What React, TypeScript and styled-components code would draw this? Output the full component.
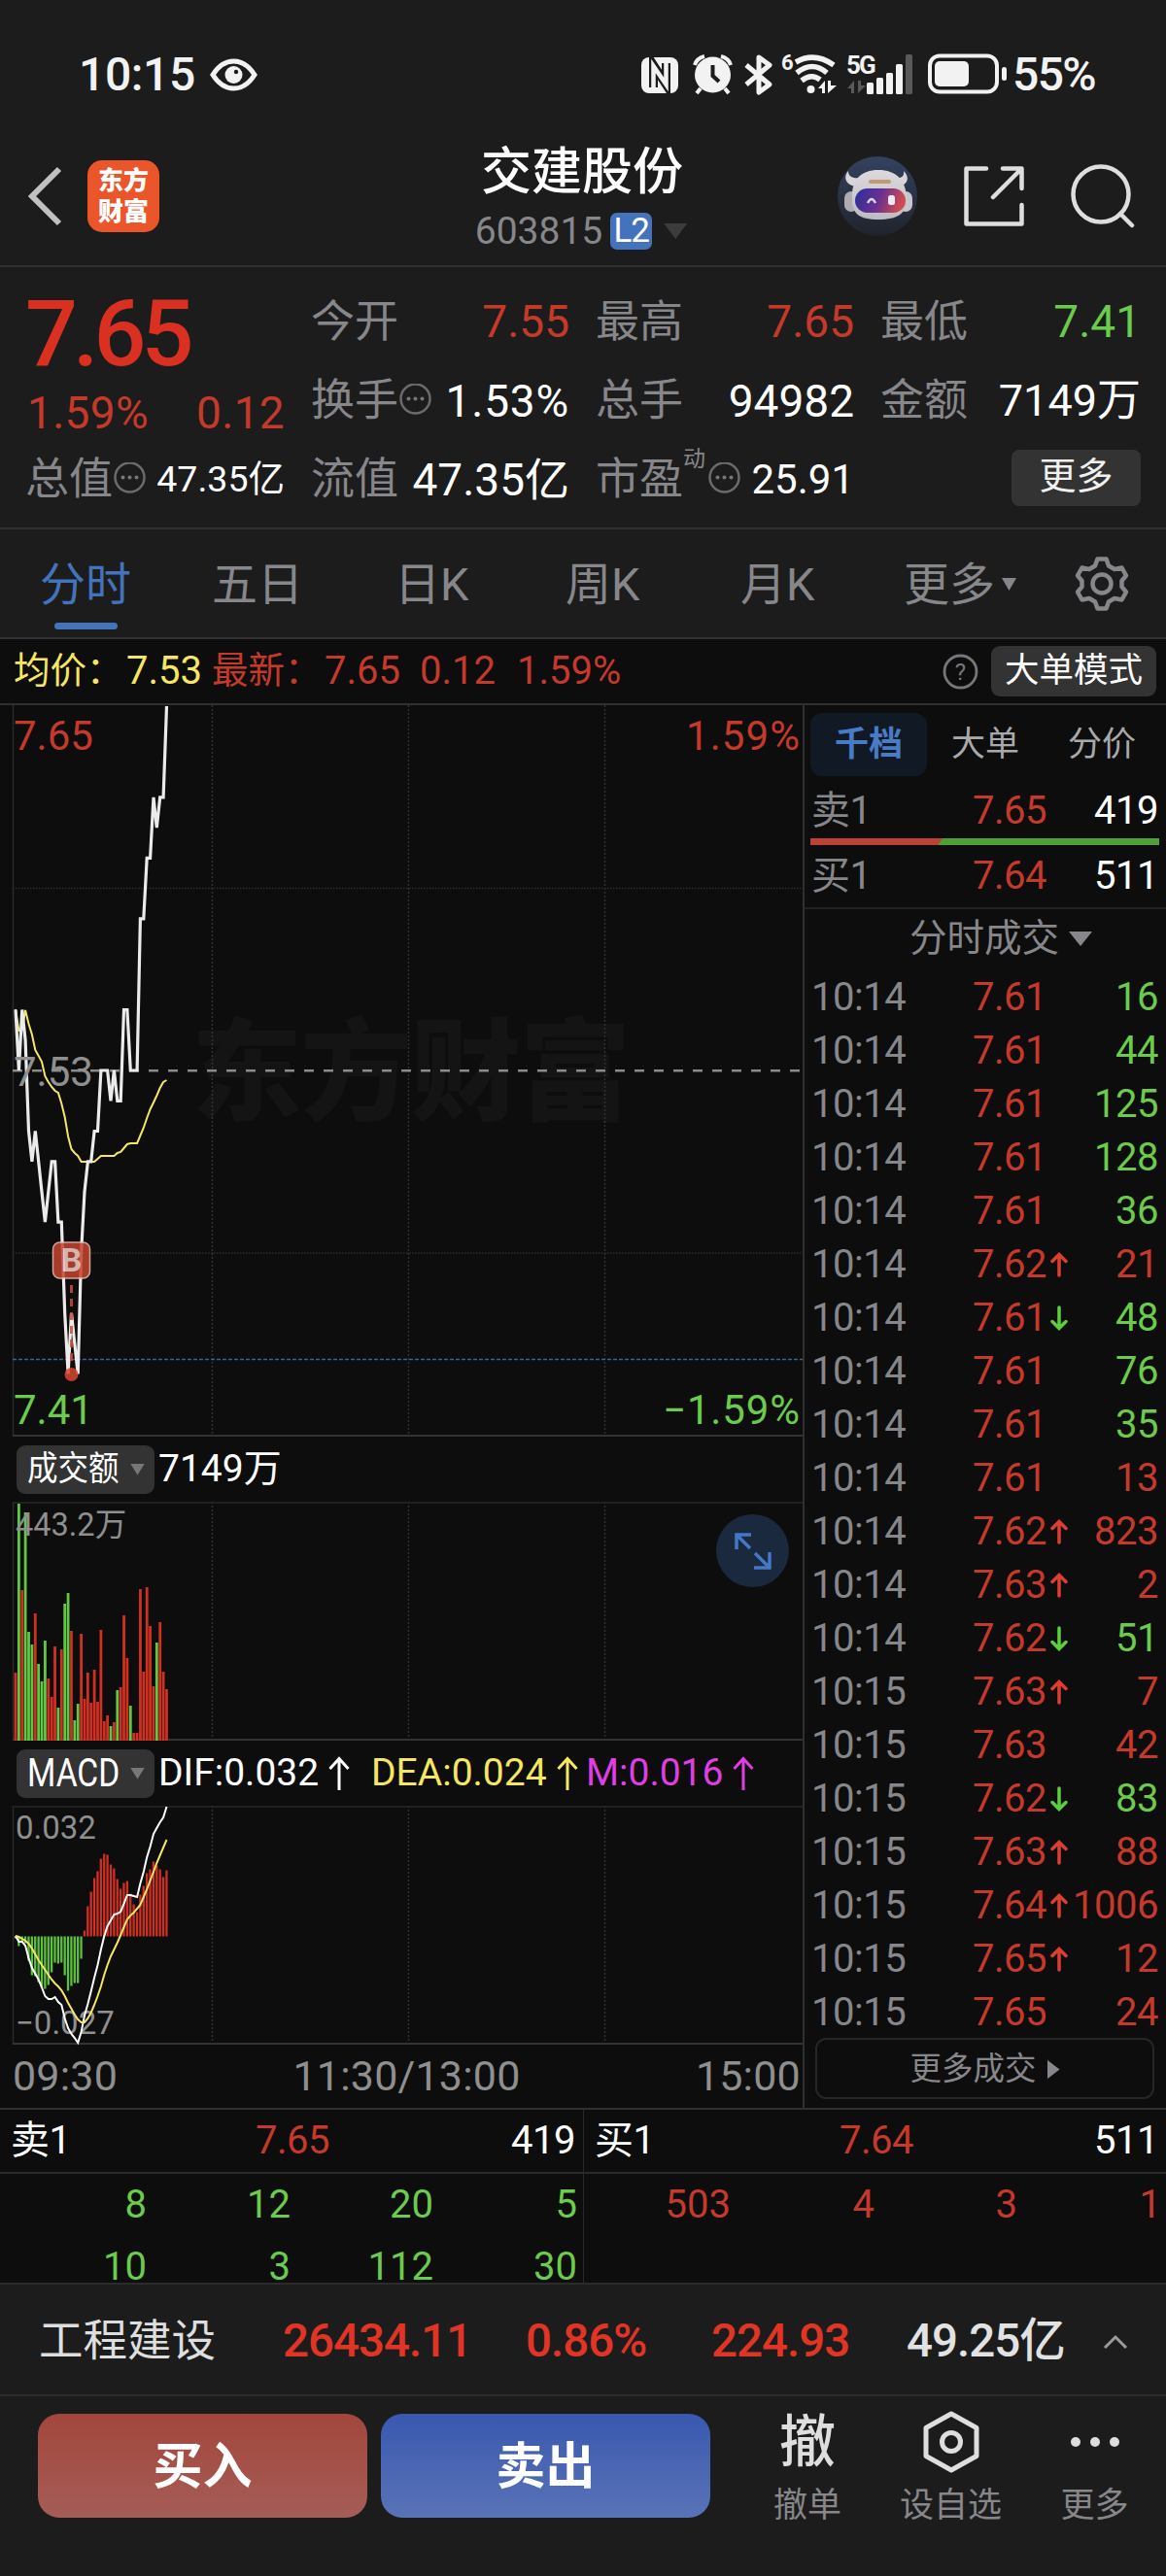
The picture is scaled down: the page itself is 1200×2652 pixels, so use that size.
import React, {ReactElement} from "react";
import styled, {createGlobalStyle} from "styled-components";

const RED = '#c5392b';
const GREEN = '#6bcb4c';
const YELLOW = '#f5e663';
const BLUE = '#4472bb';
const GREY = '#87878b';
const LINE = '#303031';

const GlobalStyle = createGlobalStyle`
    * {
        box-sizing: border-box;
    }
    body {
        margin: 0;
        background: #1c1c1c;
        color: #fff;
        font-family: Roboto, "Noto Sans CJK SC", sans-serif;
        font-size: 40px;
        line-height: 1;
    }
    svg {
        display: block;
        flex: none;
    }
`;

const Page = styled.div`
    width: 1200px;
    height: 2652px;
    overflow: hidden;
    display: flex;
    flex-direction: column;
    white-space: nowrap;
`;

/* ---------- status bar ---------- */

const StatusBar = styled.div`
    height: 150px;
    padding: 3px 71px 0 81px;
    display: flex;
    align-items: center;
    color: #f2f2f2;
    font-size: 48px;
    font-weight: 500;
`;

const Clock = styled.span`
    width: 135px;
    letter-spacing: -0.4px;
`;

const StatusIcons = styled.div`
    margin-left: auto;
    display: flex;
    align-items: center;
`;

const Battery = styled.span`
    width: 87px;
    margin-left: 2px;
    letter-spacing: -1.6px;
`;

/* ---------- header ---------- */

const Header = styled.header`
    height: 125px;
    padding: 0 32px 0 28px;
    border-bottom: 2px solid ${LINE};
    display: grid;
    grid-template-columns: 1fr 240px 1fr;
`;

const HeaderSide = styled.div<{$end?: boolean}>`
    display: flex;
    align-items: center;
    height: 104px;
    gap: ${p => p.$end ? 48 : 24}px;
    justify-content: ${p => p.$end ? 'flex-end' : 'flex-start'};
`;

const Logo = styled.div`
    width: 74px;
    height: 74px;
    border-radius: 15px;
    background: #ea5529;
    display: flex;
    flex-direction: column;
    align-items: center;
    justify-content: center;
    font-size: 26px;
    line-height: 32px;
    font-weight: 900;
`;

const Title = styled.div`
    display: flex;
    flex-direction: column;
    align-items: center;
`;

const StockName = styled.h1`
    margin: 2px 0 0 2px;
    font-size: 52px;
    line-height: 52px;
    font-weight: 500;
`;

const StockCode = styled.div`
    margin-top: 14px;
    height: 40px;
    display: flex;
    align-items: center;
    color: ${GREY};
    font-size: 39px;
`;

const LevelTag = styled.span`
    width: 43px;
    height: 38px;
    margin: 0 12px 0 8px;
    border-radius: 7px;
    background: ${BLUE};
    color: #fff;
    font-size: 35px;
    line-height: 38px;
    text-align: center;
    letter-spacing: -1px;
`;

const Triangle = styled.i<{$w: number; $h: number; $color: string}>`
    flex: none;
    width: ${p => p.$w}px;
    height: ${p => p.$h}px;
    background: ${p => p.$color};
    clip-path: polygon(0 0, 100% 0, 50% 100%);
`;

/* ---------- quote ---------- */

const Quote = styled.section`
    height: 270px;
    padding: 15px 26px 0;
    border-bottom: 2px solid ${LINE};
    display: grid;
    grid-template-columns: 267px 266px 266px 268px;
    grid-template-rows: 82px 81px 81px;
    column-gap: 27px;
    font-size: 46px;
`;

const BigPrice = styled.div`
    grid-row: span 2;
    display: flex;
    flex-direction: column;
    color: ${RED};
`;

const Price = styled.div`
    height: 108px;
    font-size: 95px;
    line-height: 108px;
    font-weight: 500;
    letter-spacing: -5px;
    color: #d93022;
`;

const Change = styled.div`
    display: flex;
    justify-content: space-between;
    align-items: center;
    height: 54px;
    padding-left: 2px;
    letter-spacing: 0.3px;
`;

const Cell = styled.div`
    display: flex;
    align-items: center;
`;

const CellLabel = styled.span`
    font-size: 45px;
    color: ${GREY};
`;

const CellValue = styled.span<{$color?: string; $size?: number; $spacing?: number}>`
    margin-left: auto;
    font-size: ${p => p.$size || 46}px;
    letter-spacing: ${p => p.$spacing || 0}px;
    color: ${p => p.$color || '#fff'};
`;

const Sup = styled.sup`
    align-self: flex-start;
    margin-top: 5px;
    width: 25px;
    font-size: 23px;
    line-height: 30px;
    color: ${GREY};
`;

const MoreButton = styled.button`
    margin: -3px 0 0 auto;
    width: 133px;
    height: 58px;
    padding: 0 0 4px;
    border: 0;
    border-radius: 8px;
    background: #333334;
    color: #f0f0f0;
    font: inherit;
    font-size: 38px;
`;

/* ---------- period tabs ---------- */

const Tabs = styled.nav`
    height: 113px;
    padding: 0 37px 0 41px;
    border-bottom: 2px solid ${LINE};
    display: grid;
    grid-template-columns: 177px 188px 176px 180px 168px 175px 58px;
    align-items: center;
    font-size: 47px;
    color: ${GREY};
`;

const Tab = styled.div<{$active?: boolean}>`
    position: relative;
    display: flex;
    align-items: center;
    gap: 7px;
    height: 110px;
    padding-top: 2px;
    color: ${p => p.$active ? BLUE : GREY};
    &::after {
        content: '';
        display: ${p => p.$active ? 'block' : 'none'};
        position: absolute;
        left: 15px;
        bottom: 8px;
        width: 65px;
        height: 7px;
        border-radius: 4px;
        background: ${BLUE};
    }
`;

const InfoRow = styled.div`
    height: 68px;
    padding: 0 10px 0 14px;
    background: #0d0d0d;
    border-bottom: 2px solid ${LINE};
    display: flex;
    align-items: center;
    font-size: 40px;
    color: ${RED};
`;

const InfoLabel = styled.span<{$w: number; $color: string}>`
    width: ${p => p.$w}px;
    font-size: 37.5px;
    color: ${p => p.$color};
`;

const InfoValue = styled.span<{$w: number; $color?: string}>`
    width: ${p => p.$w}px;
    color: ${p => p.$color || RED};
`;

const ModeButton = styled.button`
    margin-left: 13px;
    width: 170px;
    height: 52px;
    padding: 0;
    border: 0;
    border-radius: 9px;
    background: #333334;
    color: #fff;
    font: inherit;
    font-size: 35.5px;
`;

/* ---------- charts ---------- */

const Main = styled.main`
    height: 1444px;
    background: #0d0d0d;
    display: grid;
    grid-template-columns: 828px 372px;
`;

const Charts = styled.section`
    position: relative;
    border-right: 2px solid ${LINE};
    display: flex;
    flex-direction: column;
`;

const IndicatorRow = styled.div<{$h: number}>`
    height: ${p => p.$h}px;
    padding-left: 17px;
    display: flex;
    align-items: center;
    font-size: 39px;
`;

const Picker = styled.div`
    width: 142px;
    height: 50px;
    padding: 0 10px 0 11px;
    margin-right: 4px;
    border-radius: 9px;
    background: #333334;
    display: flex;
    align-items: center;
    justify-content: space-between;
`;

/* the picker caption is condensed to a fixed width */
const Caption = styled.span<{$scale: number; $size: number}>`
    width: 94px;
    font-size: ${p => p.$size}px;
    transform: scaleX(${p => p.$scale});
    transform-origin: left;
`;

const Indicator = styled.span<{$color: string; $w: number}>`
    display: flex;
    align-items: center;
    gap: 10px;
    width: ${p => p.$w}px;
    color: ${p => p.$color};
`;

const TimeAxis = styled.div`
    flex: 1;
    padding: 0 2px 0 13px;
    display: flex;
    align-items: center;
    justify-content: space-between;
    font-size: 43px;
    letter-spacing: 0.2px;
    color: #8f8f8f;
`;

const ExpandButton = styled.button`
    position: absolute;
    left: 737px;
    top: 833px;
    width: 75px;
    height: 75px;
    padding: 18px;
    border: 0;
    border-radius: 50%;
    background: #1b293f;
`;

/* ---------- order side ---------- */

const Side = styled.aside`
    display: flex;
    flex-direction: column;
`;

const SideTabs = styled.div`
    height: 81px;
    padding: 0 6px;
    display: grid;
    grid-template-columns: repeat(3, 120px);
    align-items: center;
`;

const SideTab = styled.div<{$active?: boolean}>`
    height: 65px;
    border-radius: 12px;
    background: ${p => p.$active ? '#111a24' : 'none'};
    color: ${p => p.$active ? '#497cc6' : '#a9a9ab'};
    font-size: 35px;
    font-weight: ${p => p.$active ? 700 : 400};
    line-height: 66px;
    text-align: center;
`;

const Row = styled.div<{$h: number}>`
    height: ${p => p.$h}px;
    padding: 0 8px 0 7px;
    display: grid;
    grid-template-columns: 166px 75px 1fr auto;
    align-items: center;
    color: ${GREY};
    letter-spacing: -0.5px;
`;

const Num = styled.span<{$color: string; $left?: boolean}>`
    color: ${p => p.$color};
    text-align: ${p => p.$left ? 'left' : 'right'};
`;

const ArrowSlot = styled.span`
    width: 22px;
    padding-left: 5px;
`;

const RatioBar = styled.div`
    height: 7px;
    margin: 0 7px 0 6px;
    background: linear-gradient(120deg, #bd4236 0 37.3%, #4ea034 37.5%);
`;

const DealsTitle = styled.div`
    height: 65px;
    border-top: 2px solid #222223;
    display: flex;
    align-items: center;
    gap: 10px;
    padding: 0 0 2px 108px;
    font-size: 38.5px;
    color: ${GREY};
`;

const MoreDeals = styled.button`
    margin: -2px 12px 0 11px;
    height: 63px;
    border: 2px solid #262627;
    border-radius: 11px;
    background: none;
    display: flex;
    align-items: center;
    justify-content: center;
    gap: 11px;
    padding-top: 3px;
    font: inherit;
    font-size: 32.5px;
    color: ${GREY};
`;

const RightTriangle = styled.i`
    width: 13px;
    height: 20px;
    background: ${GREY};
    clip-path: polygon(0 0, 100% 50%, 0 100%);
`;

/* ---------- order queue ---------- */

const Queue = styled.section`
    height: 182px;
    background: #0d0d0d;
    border-top: 2px solid ${LINE};
    border-bottom: 2px solid #2b2b2c;
    display: grid;
    grid-template-columns: 1fr 1fr;
`;

const QueueSide = styled.div`
    height: 178px;
    & + & {
        border-left: 1px solid #29292a;
    }
`;

const QueueHead = styled.div`
    height: 66px;
    padding: 0 8px 0 11px;
    border-bottom: 2px solid #29292a;
    display: grid;
    grid-template-columns: 252px 1fr auto;
    align-items: center;
    letter-spacing: -0.5px;
`;

const QueueGrid = styled.div`
    width: 594px;
    display: grid;
    grid-template-columns: 151px 148px 147px 148px;
    grid-auto-rows: 64px;
    align-items: center;
`;

/* ---------- footer ---------- */

const IndexRow = styled.div`
    height: 115px;
    padding: 4px 38px 0 40px;
    border-bottom: 2px solid #2b2b2c;
    display: grid;
    grid-template-columns: 251px 250px 191px 201px 202px 1fr;
    align-items: center;
    font-size: 47.5px;
    font-weight: 500;
    color: #e03526;
    letter-spacing: -1px;
`;

const IndexName = styled.span`
    font-size: 45.5px;
    font-weight: 400;
    letter-spacing: 0;
    color: #dededf;
`;

const Turnover = styled.span`
    color: #e2e2e3;
`;

const Footer = styled.footer`
    flex: 1;
    padding: 18px 0 0 39px;
    display: flex;
    align-items: flex-start;
`;

const TradeButton = styled.button<{$from: string; $to: string}>`
    flex: none;
    width: 339px;
    height: 107px;
    margin-right: 14px;
    padding: 2px 0 0;
    border: 0;
    border-radius: 22px;
    background: linear-gradient(${p => p.$from}, ${p => p.$to});
    color: #fff;
    font: inherit;
    font-size: 51px;
    font-weight: 700;
`;

const Action = styled.div<{$w: number}>`
    flex: none;
    width: ${p => p.$w}px;
    display: flex;
    flex-direction: column;
    align-items: center;
    font-size: 35px;
    color: ${GREY};
`;

const ActionIcon = styled.div`
    height: 74px;
    margin-top: -8px;
    margin-bottom: 11px;
    display: flex;
    align-items: center;
    font-size: 58px;
    font-weight: 500;
    color: #dededf;
`;

/* ---------- data ---------- */

const prices = [
    7.55, 7.53, 7.55, 7.54, 7.51, 7.50, 7.51, 7.50, 7.49, 7.48, 7.49, 7.50, 7.50, 7.48, 7.48, 7.45,
    7.43, 7.45, 7.44, 7.43, 7.47, 7.49, 7.50, 7.50, 7.51, 7.51, 7.53, 7.53, 7.53, 7.52, 7.53, 7.52,
    7.52, 7.55, 7.55, 7.53, 7.53, 7.53, 7.58, 7.58, 7.60, 7.60, 7.62, 7.61, 7.62, 7.62, 7.65,
];

const average = [
    313, 335, 334, 314, 328, 339, 355, 361, 367, 382, 388, 393, 397, 399, 410, 424, 444, 457, 461, 464,
    470, 470, 470, 470, 470, 467, 464, 464, 464, 464, 464, 461, 460, 456, 452, 451, 451, 451, 443, 435,
    425, 416, 409, 402, 394, 388, 386,
];

const volumes: [string, number][] = [
    ['r', 70], ['g', 244], ['r', 155], ['g', 235], ['g', 112], ['g', 99], ['r', 131], ['g', 79], ['g', 61],
    ['g', 103], ['r', 64], ['r', 45], ['r', 97], ['g', 34], ['r', 94], ['g', 141], ['g', 152], ['r', 113],
    ['g', 21], ['g', 38], ['r', 110], ['r', 43], ['r', 70], ['r', 39], ['r', 73], ['r', 40], ['r', 114],
    ['r', 20], ['r', 26], ['g', 15], ['r', 19], ['g', 52], ['r', 55], ['r', 129], ['r', 85], ['g', 36],
    ['r', 8], ['r', 8], ['r', 156], ['r', 71], ['r', 158], ['r', 118], ['r', 56], ['g', 101], ['r', 122],
    ['r', 71], ['r', 53],
];

const histogram = [
    -2, -10, -5, -7, -25, -40, -41, -47, -52, -54, -50, -37, -27, -28, -27, -40, -56, -51, -48, -48, -23,
    6, 31, 46, 60, 67, 80, 85, 84, 74, 70, 59, 49, 55, 57, 44, 33, 25, 43, 52, 65, 69, 77, 73, 69, 61, 68,
];

const dif = [
    134, 140, 140, 144, 157, 167, 173, 179, 187, 196, 199, 199, 197, 202, 205, 219, 229, 235, 239, 244,
    233, 216, 204, 191, 177, 164, 148, 134, 124, 118, 112, 111, 109, 101, 92, 92, 93, 94, 80, 68, 53, 42,
    29, 23, 17, 12, 1,
];

const dea = [
    134, 135, 137, 139, 142, 147, 153, 159, 164, 169, 174, 179, 183, 186, 190, 196, 203, 209, 215, 220,
    223, 223, 219, 213, 205, 196, 186, 174, 164, 155, 148, 141, 133, 125, 117, 113, 110, 106, 102, 94, 86,
    77, 68, 59, 51, 43, 35,
];

type Deal = [string, string, number, string, string];

const deals: Deal[] = [
    ['10:14', '7.61', 0, '16', 'g'],
    ['10:14', '7.61', 0, '44', 'g'],
    ['10:14', '7.61', 0, '125', 'g'],
    ['10:14', '7.61', 0, '128', 'g'],
    ['10:14', '7.61', 0, '36', 'g'],
    ['10:14', '7.62', 1, '21', 'r'],
    ['10:14', '7.61', -1, '48', 'g'],
    ['10:14', '7.61', 0, '76', 'g'],
    ['10:14', '7.61', 0, '35', 'g'],
    ['10:14', '7.61', 0, '13', 'r'],
    ['10:14', '7.62', 1, '823', 'r'],
    ['10:14', '7.63', 1, '2', 'r'],
    ['10:14', '7.62', -1, '51', 'g'],
    ['10:15', '7.63', 1, '7', 'r'],
    ['10:15', '7.63', 0, '42', 'r'],
    ['10:15', '7.62', -1, '83', 'g'],
    ['10:15', '7.63', 1, '88', 'r'],
    ['10:15', '7.64', 1, '1006', 'r'],
    ['10:15', '7.65', 1, '12', 'r'],
    ['10:15', '7.65', 0, '24', 'r'],
];

const minuteX = (i: number): number => 16 + i * 3.38;
const toPoints = (ys: number[]): string => ys.map((y, i) => `${minuteX(i).toFixed(1)},${y.toFixed(1)}`).join(' ');
const tone = (c: string): string => c === 'g' ? GREEN : RED;

/* ---------- icons ---------- */

const EyeIcon = (): ReactElement => (
    <svg width="49" height="34" viewBox="0 0 49 34" fill="none">
        <path d="M3 17C9 7.500 16 3 24.500 3S40 7.500 46 17C40 26.500 33 31 24.500 31S9 26.500 3 17Z" stroke="#f2f2f2" strokeWidth="5"/>
        <circle cx="24.500" cy="17" r="9" fill="#f2f2f2"/>
        <circle cx="27" cy="14" r="2.200" fill="#1c1c1c"/>
    </svg>
);

const SignalIcons = (): ReactElement => (
    <svg width="380" height="56" viewBox="0 -6 380 56" fill="#f2f2f2">
        {/* nfc */}
        <rect x="0" y="4" width="38" height="37" rx="8"/>
        <path d="M12.500 35V12L25.500 32V10" fill="none" stroke="#1c1c1c" strokeWidth="9"/>
        <path d="M12.500 41V13L25.500 32V4" fill="none" stroke="#f2f2f2" strokeWidth="4.500"/>
        {/* alarm */}
        <circle cx="73.500" cy="22" r="18.500"/>
        <path d="M55 12Q57 5 65 3M92 12Q90 5 82 3M61 36L57 41M86 36L90 41" fill="none" stroke="#f2f2f2" strokeWidth="4"/>
        <path d="M73.500 12V23L80 29" fill="none" stroke="#1c1c1c" strokeWidth="4"/>
        {/* bluetooth */}
        <path d="M108 12L132 32L121 40V4L132 12L108 32" fill="none" stroke="#f2f2f2" strokeWidth="5" strokeLinejoin="round"/>
        {/* wifi */}
        <text x="144" y="17" fontSize="22" fontWeight="700">6</text>
        <path d="M159 9Q178 -2 198 12" fill="none" stroke="#f2f2f2" strokeWidth="5.500"/>
        <path d="M160 20Q176 7 191 20" fill="none" stroke="#f2f2f2" strokeWidth="5.500"/>
        <path d="M165 28Q175 20 184 27" fill="none" stroke="#f2f2f2" strokeWidth="5.500"/>
        <circle cx="174.500" cy="37" r="4"/>
        <path d="M182 36L189 28V41H186V36ZM192 28V41L201 33H195V28Z"/>
        {/* cellular */}
        <text x="211" y="21" fontSize="26" fontWeight="700" letterSpacing="-1.800">5G</text>
        <path d="M212 36L219 28V41H216V36ZM223 28V41L231 33H226V28Z" fill="#595959"/>
        <rect x="232" y="30" width="7" height="12" rx="1.500"/>
        <rect x="242" y="25" width="7" height="17" rx="1.500"/>
        <rect x="252" y="20" width="7" height="22" rx="1.500"/>
        <rect x="262" y="11" width="7" height="31" rx="1.500"/>
        <rect x="272" y="1" width="7" height="41" rx="1.500" fill="#595959"/>
        {/* battery */}
        <rect x="297" y="2.500" width="69" height="37" rx="10" fill="none" stroke="#f2f2f2" strokeWidth="4"/>
        <rect x="302" y="8" width="35" height="26" rx="5"/>
        <rect x="371" y="14" width="5" height="14" rx="2.500"/>
    </svg>
);

const BackIcon = (): ReactElement => (
    <svg width="38" height="62" viewBox="0 0 38 62" fill="none" stroke="#c0c0c0" strokeWidth="6">
        <path d="M33 3L5 31L33 59"/>
    </svg>
);

const RobotIcon = (): ReactElement => (
    <svg width="82" height="82" viewBox="0 0 82 82">
        <defs>
            <linearGradient id="sky" x1="0" y1="0" x2="0" y2="1">
                <stop offset="0" stopColor="#34425f"/>
                <stop offset="1" stopColor="#1f232b"/>
            </linearGradient>
            <linearGradient id="visor" x1="0" y1="0" x2="1" y2="0.200">
                <stop offset="0" stopColor="#28309b"/>
                <stop offset="0.550" stopColor="#6a3090"/>
                <stop offset="1" stopColor="#cf4a52"/>
            </linearGradient>
            <linearGradient id="shell" x1="0" y1="0" x2="0" y2="1">
                <stop offset="0" stopColor="#dcdade"/>
                <stop offset="1" stopColor="#bdbac2"/>
            </linearGradient>
        </defs>
        <circle cx="41" cy="41" r="41" fill="url(#sky)"/>
        <path d="M18 31C9 29 5 22 11 15C11 21 16 23 23 22ZM63 31C72 29 75 22 68 15C69 21 65 23 59 22Z" fill="#d8d6da"/>
        <rect x="7" y="36" width="14" height="21" rx="7" fill="#aeabb3"/>
        <rect x="63" y="36" width="14" height="21" rx="7" fill="#c8c6cc"/>
        <path d="M15 44C14 24 24 14 42 14S71 24 71 44C71 59 62 65 42 65S15 59 15 44Z" fill="url(#shell)"/>
        <rect x="18" y="33" width="52" height="25" rx="12.500" fill="url(#visor)"/>
        <rect x="32" y="24" width="23" height="4" rx="2" fill="#c29a72"/>
        <path d="M31 48Q35 40 39 48" fill="none" stroke="#d9d4ee" strokeWidth="2.500"/>
        <rect x="52" y="40" width="7" height="10" rx="2.500" fill="#efe9f3"/>
    </svg>
);

const ShareIcon = (): ReactElement => (
    <svg width="62" height="62" viewBox="0 0 62 62" fill="none" stroke="#dedede" strokeWidth="4.500" strokeLinecap="round" strokeLinejoin="round">
        <path d="M23 2.500H2.500V59.500H59.500V40"/>
        <path d="M40 2.500H59.500V23M59 3L30 32"/>
    </svg>
);

const SearchIcon = (): ReactElement => (
    <svg width="66" height="66" viewBox="0 0 66 66" fill="none" stroke="#dedede" strokeWidth="4.500" strokeLinecap="round">
        <circle cx="31" cy="31" r="28.500"/>
        <path d="M51 51L63 63"/>
    </svg>
);

const DotsCircle = (): ReactElement => (
    <svg width="35" height="35" viewBox="0 0 35 35" fill="none">
        <circle cx="17.500" cy="15.500" r="15" stroke="#6b6b6e" strokeWidth="2.500"/>
        <g fill="#77777a">
            <circle cx="10.500" cy="15.500" r="2"/>
            <circle cx="17.500" cy="15.500" r="2"/>
            <circle cx="24.500" cy="15.500" r="2"/>
        </g>
    </svg>
);

const GearIcon = (): ReactElement => (
    <svg width="58" height="58" viewBox="0 0 58 58" fill="none" stroke={GREY} strokeWidth="4.500" strokeLinejoin="round">
        <path d="M24.500 3.500H33.500L36 10.500L42 14L49.500 12.500L54 20.500L49.500 26V32L54 37.500L49.500 45.500L42 44L36 47.500L33.500 54.500H24.500L22 47.500L16 44L8.500 45.500L4 37.500L8.500 32V26L4 20.500L8.500 12.500L16 14L22 10.500Z"/>
        <circle cx="29" cy="29" r="9.500"/>
    </svg>
);

const HelpSlot = styled.div`
    margin-left: auto;
`;

const HelpIcon = (): ReactElement => (
    <svg width="37" height="37" viewBox="0 0 37 37">
        <circle cx="18.500" cy="18.500" r="16.500" fill="none" stroke="#77777a" strokeWidth="2.800"/>
        <text x="18.500" y="27" fontSize="24" textAnchor="middle" fill="#77777a">?</text>
    </svg>
);

const TrendArrow = (): ReactElement => (
    <svg width="22" height="36" viewBox="0 0 22 36" fill="none" stroke="currentColor" strokeWidth="3">
        <path d="M11 35V3M1.500 13L11 2.500L20.500 13"/>
    </svg>
);

const DealArrow = ({dir}: {dir: number}): ReactElement => (
    <svg width="18" height="26" viewBox="0 0 18 26" fill="none" stroke={dir > 0 ? '#dc3f30' : '#5ccf3c'} strokeWidth="3.500" strokeLinecap="round">
        <path d={dir > 0 ? 'M9 24V3M2 9.500L9 2.500L16 9.500' : 'M9 2V23M2 16.500L9 23.500L16 16.500'}/>
    </svg>
);

/* ---------- chart parts ---------- */

const GridLines = ({h}: {h: number}): ReactElement => (
    <g stroke="#333334" strokeWidth="1.500">
        {[218.5, 420.5, 622.5].map(x => (
            <line key={x} x1={x} x2={x} y1="0" y2={h} strokeDasharray="2 2"/>
        ))}
        <line x1="13.500" x2="13.500" y1="0" y2={h} stroke="#2a2a2b"/>
        <line x1="13" x2="826" y1={h - 1} y2={h - 1} strokeWidth="2"/>
    </g>
);

const PriceChart = (): ReactElement => (
    <svg width="826" height="753" viewBox="0 0 826 753" fill="none">
        <text x="197" y="418" fontSize="114" fontWeight="900" textLength="452" fill="#141414">东方财富</text>
        <GridLines h={753}/>
        <g stroke="#2e2e2f" strokeWidth="1.500" strokeDasharray="1.500 1.500">
            <line x1="13" x2="826" y1="188.500" y2="188.500"/>
            <line x1="13" x2="826" y1="564" y2="564"/>
        </g>
        <line x1="13" x2="826" y1="376.300" y2="376.300" stroke="#8a8a8a" strokeWidth="2.500" strokeDasharray="10 10"/>
        <line x1="13" x2="826" y1="673.500" y2="673.500" stroke="#38669a" strokeWidth="1.600" strokeDasharray="4 2"/>
        <polyline points={toPoints(average)} stroke={YELLOW} strokeWidth="2"/>
        <polyline points={toPoints(prices.map(p => 376 - (p - 7.53) * 3125))} stroke="#ebebeb" strokeWidth="3.200"/>
        <g fontSize="42">
            <text x="14" y="46" fill={RED}>7.65</text>
            <text x="823" y="46" fill={RED} textAnchor="end" textLength="117">1.59%</text>
            <text x="14" y="392" fill="#8f8f8f">7.53</text>
            <text x="14" y="740" fill={GREEN}>7.41</text>
            <text x="823" y="740" fill={GREEN} textAnchor="end" textLength="141">−1.59%</text>
        </g>
        <g opacity="0.850">
            <line x1="73.500" x2="73.500" y1="597" y2="680" stroke="#d04a38" strokeWidth="3" strokeDasharray="8 6"/>
            <circle cx="73.500" cy="689" r="7" fill="#d9452f"/>
            <rect x="54.500" y="553" width="38" height="37" rx="7" fill="#c4452f" stroke="#eebfb8" strokeWidth="1.500"/>
            <text x="73.500" y="583" fontSize="33" fontWeight="700" textAnchor="middle" fill="#f2d3ce">B</text>
        </g>
    </svg>
);

const VolumeChart = (): ReactElement => (
    <svg width="826" height="246" viewBox="0 0 826 246" fill="none">
        <GridLines h={246}/>
        <line x1="13" x2="826" y1="1" y2="1" stroke="#272728" strokeWidth="1.500"/>
        {volumes.map(([c, v], i) => (
            <rect key={i} x={minuteX(i) - 1.4} y={246 - v} width="2.800" height={v} fill={c === 'g' ? '#62c843' : '#cf3022'}/>
        ))}
        <text x="16" y="35" fontSize="32.500" fill="#8f8f8f">443.2万</text>
    </svg>
);

const MacdChart = (): ReactElement => (
    <svg width="826" height="246" viewBox="0 0 826 246" fill="none">
        <GridLines h={246}/>
        <line x1="13" x2="826" y1="1" y2="1" stroke="#272728" strokeWidth="1.500"/>
        {histogram.map((v, i) => (
            <rect key={i} x={minuteX(i) - 1.2} y={v > 0 ? 134.5 - v : 134.5} width="2.300" height={Math.abs(v)} fill={v < 0 ? '#5cc23c' : '#cf3022'}/>
        ))}
        <g fontSize="33" fill="#8f8f8f">
            <text x="16" y="34">0.032</text>
            <text x="16" y="235">−0.027</text>
        </g>
        <polyline points={toPoints(dif)} stroke="#fff" strokeWidth="2"/>
        <polyline points={toPoints(dea)} stroke={YELLOW} strokeWidth="2"/>
    </svg>
);

const QueueNumbers = ({items, color}: {items: number[]; color: string}): ReactElement => (
    <QueueGrid>
        {items.map((n, i) => <Num key={i} $color={color}>{n}</Num>)}
    </QueueGrid>
);

const App = (): ReactElement => {
    return (
        <Page>
            <GlobalStyle/>
            <StatusBar>
                <Clock>10:15</Clock>
                <EyeIcon/>
                <StatusIcons>
                    <SignalIcons/>
                    <Battery>55%</Battery>
                </StatusIcons>
            </StatusBar>

            <Header>
                <HeaderSide>
                    <BackIcon/>
                    <Logo>
                        <span>东方</span>
                        <span>财富</span>
                    </Logo>
                </HeaderSide>
                <Title>
                    <StockName>交建股份</StockName>
                    <StockCode>
                        603815
                        <LevelTag>L2</LevelTag>
                        <Triangle $w={24} $h={16} $color="#3c3c3d"/>
                    </StockCode>
                </Title>
                <HeaderSide $end>
                    <RobotIcon/>
                    <ShareIcon/>
                    <SearchIcon/>
                </HeaderSide>
            </Header>

            <Quote>
                <BigPrice>
                    <Price>7.65</Price>
                    <Change>
                        <span>1.59%</span>
                        <span>0.12</span>
                    </Change>
                </BigPrice>
                <Cell><CellLabel>今开</CellLabel><CellValue $color={RED}>7.55</CellValue></Cell>
                <Cell><CellLabel>最高</CellLabel><CellValue $color={RED}>7.65</CellValue></Cell>
                <Cell><CellLabel>最低</CellLabel><CellValue $color={GREEN}>7.41</CellValue></Cell>
                <Cell><CellLabel>换手</CellLabel><DotsCircle/><CellValue $spacing={0.8}>1.53%</CellValue></Cell>
                <Cell><CellLabel>总手</CellLabel><CellValue>94982</CellValue></Cell>
                <Cell><CellLabel>金额</CellLabel><CellValue $size={45}>7149万</CellValue></Cell>
                <Cell><CellLabel>总值</CellLabel><DotsCircle/><CellValue $size={37.5}>47.35亿</CellValue></Cell>
                <Cell><CellLabel>流值</CellLabel><CellValue>47.35亿</CellValue></Cell>
                <Cell><CellLabel>市盈</CellLabel><Sup>动</Sup><DotsCircle/><CellValue $size={42}>25.91</CellValue></Cell>
                <Cell><MoreButton>更多</MoreButton></Cell>
            </Quote>

            <Tabs>
                <Tab $active>分时</Tab>
                <Tab>五日</Tab>
                <Tab>日K</Tab>
                <Tab>周K</Tab>
                <Tab>月K</Tab>
                <Tab>更多<Triangle $w={15} $h={13} $color={GREY}/></Tab>
                <GearIcon/>
            </Tabs>

            <InfoRow>
                <InfoLabel $w={116} $color={YELLOW}>均价：</InfoLabel>
                <InfoValue $w={88} $color={YELLOW}>7.53</InfoValue>
                <InfoLabel $w={116} $color={RED}>最新：</InfoLabel>
                <InfoValue $w={98}>7.65</InfoValue>
                <InfoValue $w={100}>0.12</InfoValue>
                <InfoValue $w={110}>1.59%</InfoValue>
                <HelpSlot><HelpIcon/></HelpSlot>
                <ModeButton>大单模式</ModeButton>
            </InfoRow>

            <Main>
                <Charts>
                    <PriceChart/>
                    <IndicatorRow $h={67}>
                        <Picker>
                            <Caption $size={35} $scale={0.9}>成交额</Caption>
                            <Triangle $w={15} $h={12} $color="#77777a"/>
                        </Picker>
                        <span>7149万</span>
                    </IndicatorRow>
                    <VolumeChart/>
                    <IndicatorRow $h={67}>
                        <Picker>
                            <Caption $size={40} $scale={0.84}>MACD</Caption>
                            <Triangle $w={15} $h={12} $color="#77777a"/>
                        </Picker>
                        <Indicator $w={219} $color="#fff">DIF:0.032<TrendArrow/></Indicator>
                        <Indicator $w={221} $color={YELLOW}>DEA:0.024<TrendArrow/></Indicator>
                        <Indicator $w={180} $color="#df3fe0">M:0.016<TrendArrow/></Indicator>
                    </IndicatorRow>
                    <MacdChart/>
                    <TimeAxis>
                        <span>09:30</span>
                        <span>11:30/13:00</span>
                        <span>15:00</span>
                    </TimeAxis>
                    <ExpandButton>
                        <svg width="39" height="39" viewBox="0 0 39 39" fill="none" stroke="#4477c6" strokeWidth="3.500">
                            <path d="M18 3H3V18M3 3L17 17M37 21V37H21M37 37L22 22"/>
                        </svg>
                    </ExpandButton>
                </Charts>

                <Side>
                    <SideTabs>
                        <SideTab $active>千档</SideTab>
                        <SideTab>大单</SideTab>
                        <SideTab>分价</SideTab>
                    </SideTabs>
                    <Row $h={56}>
                        <span>卖1</span><Num $color={RED}>7.65</Num><i/><Num $color="#fff">419</Num>
                    </Row>
                    <RatioBar/>
                    <Row $h={64}>
                        <span>买1</span><Num $color={RED}>7.64</Num><i/><Num $color="#fff">511</Num>
                    </Row>
                    <DealsTitle>分时成交<Triangle $w={24} $h={15} $color={GREY}/></DealsTitle>
                    {deals.map(([time, price, dir, lots, c], i) => (
                        <Row key={i} $h={55.05}>
                            <span>{time}</span>
                            <Num $color={RED}>{price}</Num>
                            <ArrowSlot>{dir !== 0 && <DealArrow dir={dir}/>}</ArrowSlot>
                            <Num $color={tone(c)}>{lots}</Num>
                        </Row>
                    ))}
                    <MoreDeals>更多成交<RightTriangle/></MoreDeals>
                </Side>
            </Main>

            <Queue>
                <QueueSide>
                    <QueueHead>
                        <span>卖1</span><Num $color={RED} $left>7.65</Num><span>419</span>
                    </QueueHead>
                    <QueueNumbers items={[8, 12, 20, 5, 10, 3, 112, 30]} color={GREEN}/>
                </QueueSide>
                <QueueSide>
                    <QueueHead>
                        <span>买1</span><Num $color={RED} $left>7.64</Num><span>511</span>
                    </QueueHead>
                    <QueueNumbers items={[503, 4, 3, 1]} color={RED}/>
                </QueueSide>
            </Queue>

            <IndexRow>
                <IndexName>工程建设</IndexName>
                <span>26434.11</span>
                <span>0.86%</span>
                <span>224.93</span>
                <Turnover>49.25亿</Turnover>
                <svg width="26" height="16" viewBox="0 0 26 16" fill="none" stroke="#9a9a9c" strokeWidth="3">
                    <path d="M2 14L13 3L24 14"/>
                </svg>
            </IndexRow>

            <Footer>
                <TradeButton $from="#a2463c" $to="#a55d57">买入</TradeButton>
                <TradeButton $from="#3958af" $to="#5a73b7">卖出</TradeButton>
                <Action $w={172}>
                    <ActionIcon>撤</ActionIcon>
                    撤单
                </Action>
                <Action $w={123}>
                    <ActionIcon>
                        <svg width="58" height="64" viewBox="0 0 58 64" fill="none" stroke="#dededf" strokeWidth="5" strokeLinejoin="round">
                            <path d="M29 3L55 17.500V46.500L29 61L3 46.500V17.500Z"/>
                            <circle cx="29" cy="32" r="9.500"/>
                        </svg>
                    </ActionIcon>
                    设自选
                </Action>
                <Action $w={173}>
                    <ActionIcon>
                        <svg width="52" height="12" viewBox="0 0 52 12" fill="#dededf">
                            <circle cx="6" cy="6" r="5"/>
                            <circle cx="26" cy="6" r="5"/>
                            <circle cx="46" cy="6" r="5"/>
                        </svg>
                    </ActionIcon>
                    更多
                </Action>
            </Footer>
        </Page>
    )
}

export default App;
